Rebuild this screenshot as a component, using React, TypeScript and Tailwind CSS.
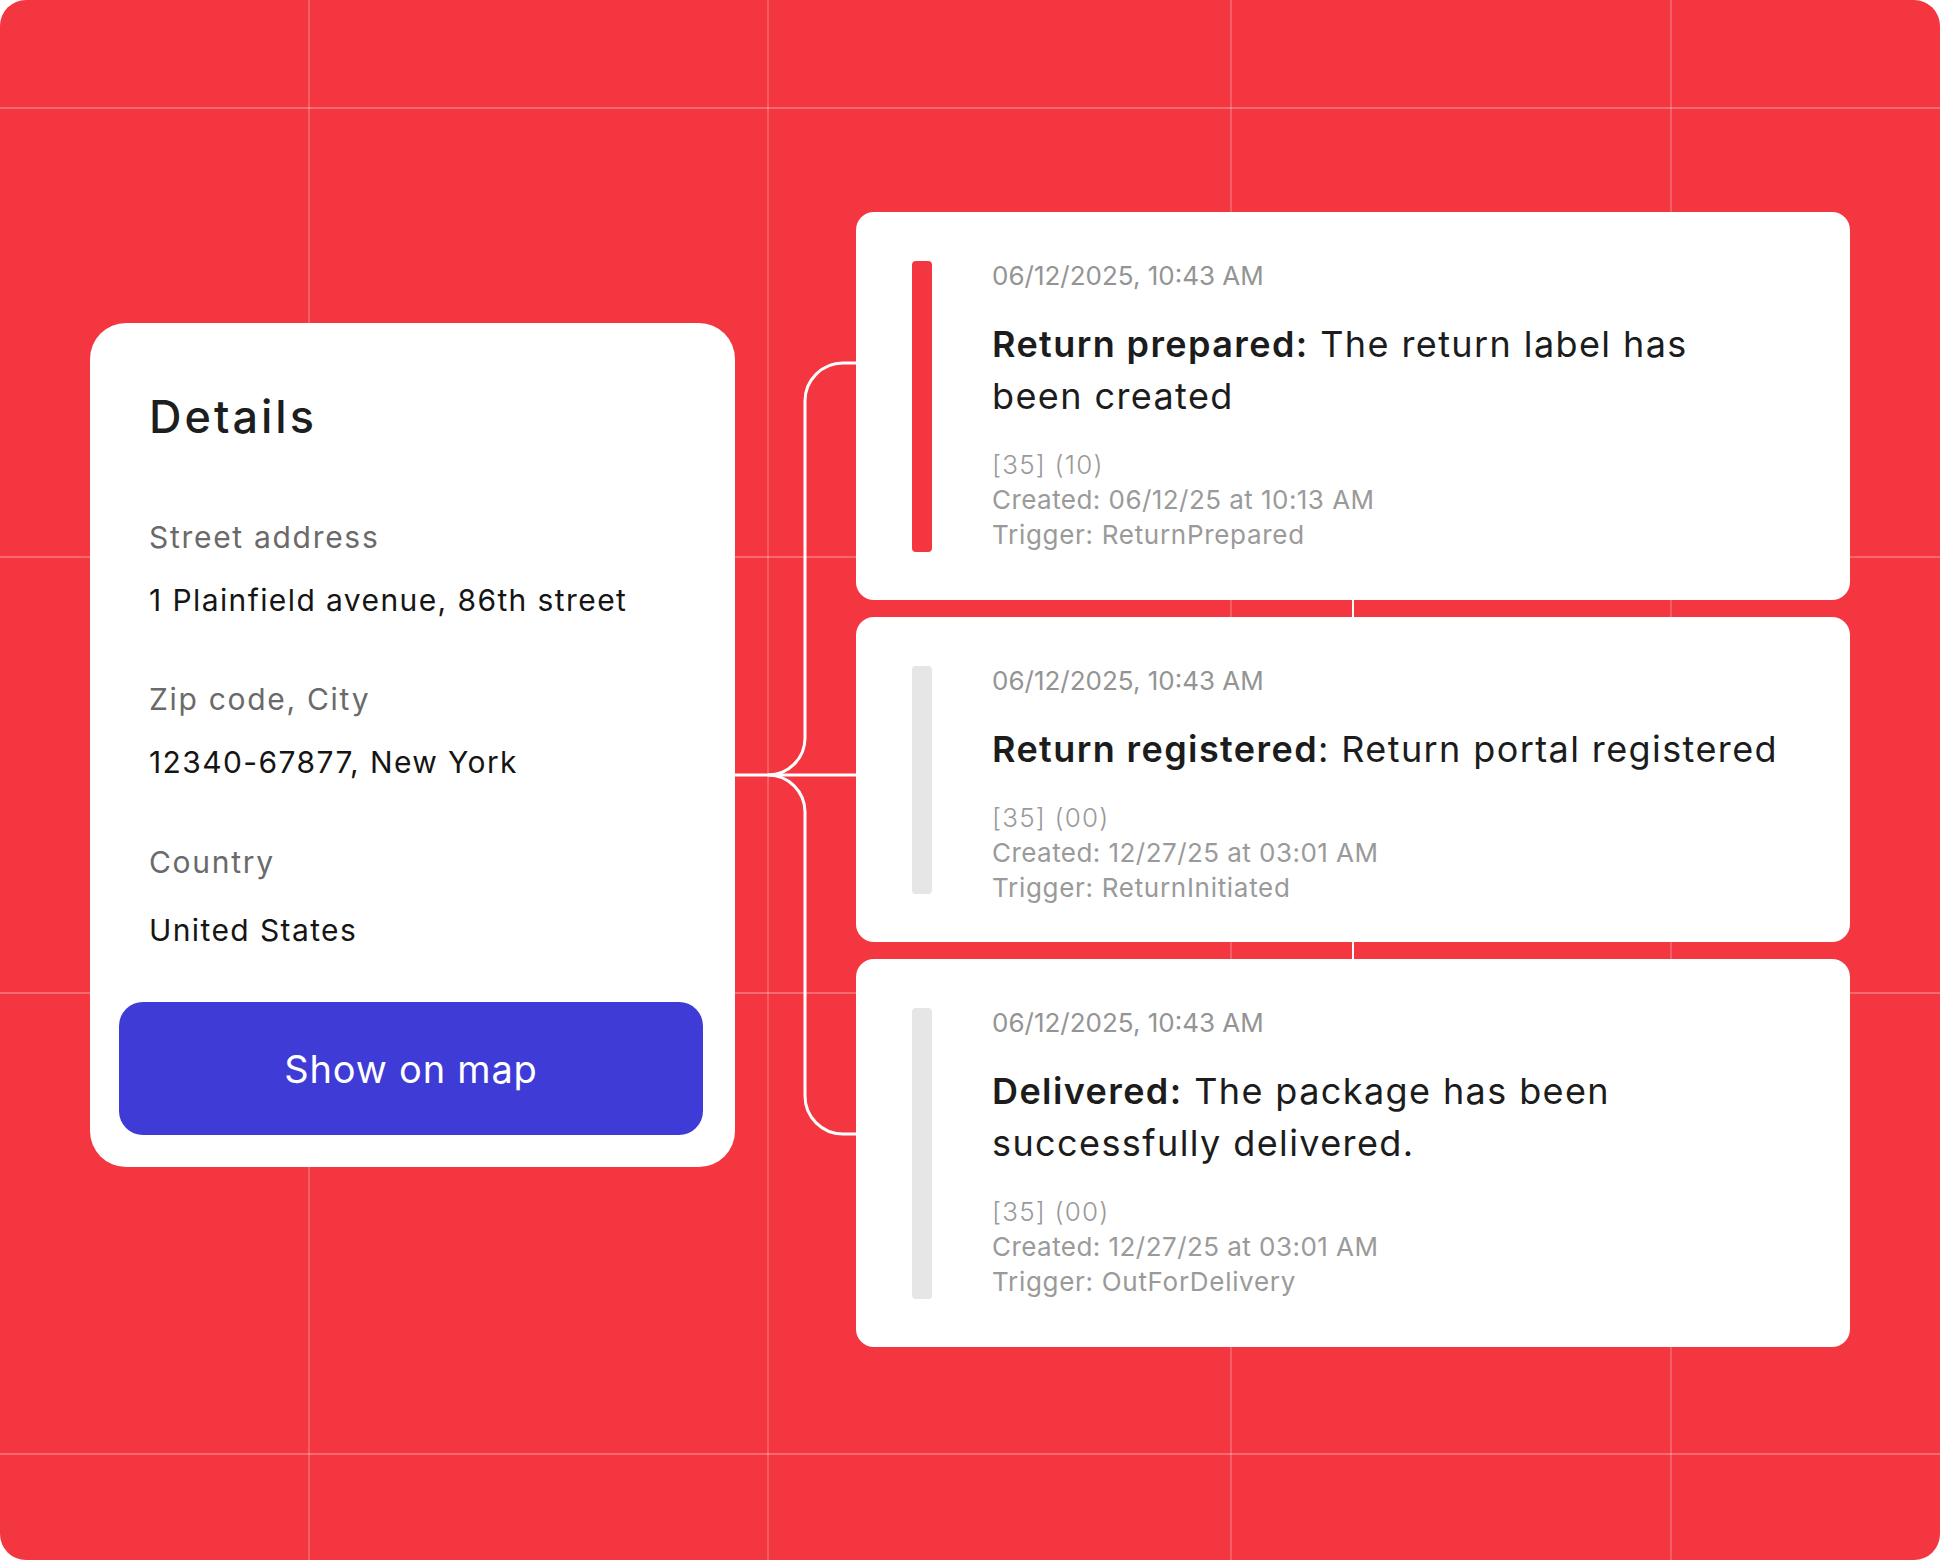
import React from "react";

const FONT = { fontFamily: "Inter, 'Noto Sans', sans-serif" };

function GridLines() {
  const hs = [107, 556, 992, 1453];
  const vs = [308, 767, 1230, 1670];
  return (
    <svg className="absolute inset-0 pointer-events-none" width={1940} height={1560}>
      {hs.map((y) => (
        <rect key={"h" + y} x={0} y={y} width={1940} height={2} fill="rgba(255,255,255,0.26)" />
      ))}
      {vs.map((x) => (
        <rect key={"v" + x} x={x} y={0} width={2} height={1560} fill="rgba(255,255,255,0.2)" />
      ))}
    </svg>
  );
}

function Field({ label, value, valueTop }: { label: string; value: string; valueTop: string }) {
  return (
    <div className="flex flex-col">
      <div className="text-[30px] leading-[40px] tracking-[1.7px] text-[#6a6a6a] whitespace-nowrap">{label}</div>
      <div className={`${valueTop} text-[30px] leading-[40px] tracking-[1.4px] text-[#151515] whitespace-nowrap`}>{value}</div>
    </div>
  );
}

function Connector() {
  return (
    <svg width={121} height={1135} className="shrink-0" fill="none">
      <path d="M0 563 H121" stroke="white" strokeWidth={3} />
      <path
        d="M121 151 H108 A38 38 0 0 0 70 189 V526 A37 37 0 0 1 33 563 A37 37 0 0 1 70 600 V884 A38 38 0 0 0 108 922 H121"
        stroke="white"
        strokeWidth={3}
      />
    </svg>
  );
}

type Ev = {
  active: boolean;
  h: string;
  bold: string;
  lines: string[];
  code: string;
  created: string;
  trigger: string;
};

function EventCard({ ev }: { ev: Ev }) {
  return (
    <div className={`${ev.h} w-full bg-white rounded-[18px] flex flex-row pl-[56px] pt-[49px] pb-[48px]`}>
      <div className={`w-[20px] rounded-[4px] shrink-0 ${ev.active ? "bg-[#f3363f]" : "bg-[#e6e6e6]"}`} />
      <div className="ml-[60px] flex flex-col">
        <div className="text-[26px] leading-[30px] text-[#949494] whitespace-nowrap">06/12/2025, 10:43 AM</div>
        <div className="mt-[27px] text-[36px] leading-[52px] tracking-[1.4px] text-[#1c1c1c] whitespace-nowrap">
          {ev.lines.map((l, i) => (
            <div key={i}>
              {i === 0 && <span className="font-semibold">{ev.bold}</span>}
              {l}
            </div>
          ))}
        </div>
        <div className="mt-[25px] flex flex-col text-[26px] leading-[35px] tracking-[0.45px] text-[#9a9a9a] whitespace-nowrap">
          <div className="font-light tracking-[1.2px]">{ev.code}</div>
          <div>{ev.created}</div>
          <div className="tracking-[0.7px]">{ev.trigger}</div>
        </div>
      </div>
    </div>
  );
}

export default function App() {
  const events: Ev[] = [
    {
      active: true,
      h: "h-[388px]",
      bold: "Return prepared:",
      lines: [" The return label has", "been created"],
      code: "[35] (10)",
      created: "Created: 06/12/25 at 10:13 AM",
      trigger: "Trigger: ReturnPrepared",
    },
    {
      active: false,
      h: "h-[325px]",
      bold: "Return registered",
      lines: [": Return portal registered"],
      code: "[35] (00)",
      created: "Created: 12/27/25 at 03:01 AM",
      trigger: "Trigger: ReturnInitiated",
    },
    {
      active: false,
      h: "h-[388px]",
      bold: "Delivered:",
      lines: [" The package has been", "successfully delivered."],
      code: "[35] (00)",
      created: "Created: 12/27/25 at 03:01 AM",
      trigger: "Trigger: OutForDelivery",
    },
  ];

  return (
    <div className="w-[1940px] h-[1560px] bg-white" style={FONT}>
      <div className="relative w-full h-full rounded-[26px] bg-[#f3363f] overflow-hidden">
        <GridLines />
        <div className="relative flex flex-row items-start pl-[90px] pt-[212px]">
          <div className="mt-[111px] w-[645px] h-[844px] shrink-0 bg-white rounded-[36px] flex flex-col pl-[29px] pr-[32px] pt-[66px]">
            <div className="pl-[30px] flex flex-col">
              <div className="text-[45px] leading-[56px] font-medium tracking-[3px] text-[#1e1e1e]">Details</div>
              <div className="mt-[72px]">
                <Field label="Street address" value="1 Plainfield avenue, 86th street" valueTop="mt-[23px]" />
              </div>
              <div className="mt-[59px]">
                <Field label="Zip code, City" value="12340-67877, New York" valueTop="mt-[23px]" />
              </div>
              <div className="mt-[60px]">
                <Field label="Country" value="United States" valueTop="mt-[28px]" />
              </div>
            </div>
            <button className="mt-[52px] h-[133px] w-full rounded-[24px] bg-[#3e3bd6] text-white text-[38px] leading-none tracking-[0.8px] flex items-center justify-center">
              Show on map
            </button>
          </div>
          <Connector />
          <div className="w-[994px] shrink-0 flex flex-col items-center">
            <EventCard ev={events[0]} />
            <div className="w-[2px] h-[17px] bg-white" />
            <EventCard ev={events[1]} />
            <div className="w-[2px] h-[17px] bg-white" />
            <EventCard ev={events[2]} />
          </div>
        </div>
      </div>
    </div>
  );
}
